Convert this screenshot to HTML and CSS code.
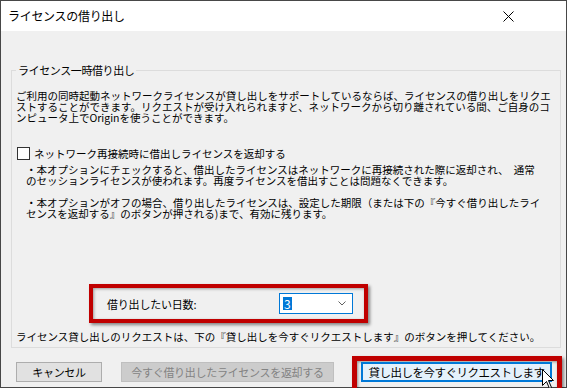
FILE: index.html
```html
<!DOCTYPE html>
<html lang="ja">
<head>
<meta charset="utf-8">
<title>ライセンスの借り出し</title>
<link rel="stylesheet" href="styles.css">
</head>
<body>
<div class="window">
  <div class="titlebar">
    <span class="title">ライセンスの借り出し</span>
    <svg class="close" width="11" height="11" viewBox="0 0 11 11"><path d="M0.5 0.5 L10.5 10.5 M10.5 0.5 L0.5 10.5" stroke="#000" stroke-width="1" fill="none"/></svg>
  </div>
  <div class="content">
    <fieldset class="group">
      <legend class="legend">ライセンス一時借り出し</legend>
      <div class="para">
        <div class="ln">ご利用の同時起動ネットワークライセンスが貸し出しをサポートしているならば、ライセンスの借り出しをリクエ</div>
        <div class="ln">ストすることができます。リクエストが受け入れられますと、ネットワークから切り離されている間、ご自身のコ</div>
        <div class="ln">ンピュータ上でOriginを使うことができます。</div>
      </div>
      <div class="check">
        <span class="box"></span>
        <span class="ln">ネットワーク再接続時に借出しライセンスを返却する</span>
      </div>
      <div class="note">
        <div class="ln">・本オプションにチェックすると、借出したライセンスはネットワークに再接続された際に返却され、　通常</div>
        <div class="ln">のセッションライセンスが使われます。再度ライセンスを借出すことは問題なくできます。</div>
        <div class="ln blank">&nbsp;</div>
        <div class="ln">・本オプションがオフの場合、借り出したライセンスは、設定した期限（または下の『今すぐ借り出したライ</div>
        <div class="ln">センスを返却する』のボタンが押される)まで、有効に残ります。</div>
      </div>
      <div class="days">
        <span class="days-label">借り出したい日数:</span>
        <div class="combo">
          <span class="sel">3</span>
          <svg class="chev" width="8" height="5" viewBox="0 0 8 5"><path d="M0.5 0.5 L4 4 L7.5 0.5" stroke="#606060" stroke-width="1" fill="none"/></svg>
        </div>
      </div>
      <div class="request ln">ライセンス貸し出しのリクエストは、下の『貸し出しを今すぐリクエストします』のボタンを押してください。</div>
    </fieldset>
    <div class="buttons">
      <button class="btn cancel">キャンセル</button>
      <button class="btn disabled" disabled>今すぐ借り出したライセンスを返却する</button>
      <div class="hl">
        <button class="btn default">貸し出しを今すぐリクエストします</button>
      </div>
    </div>
  </div>
  <svg class="cursor" width="13" height="21" viewBox="0 0 13 21"><path d="M0.5 0.5 L0.5 16.5 L4.5 12.5 L7.5 19.5 L9.5 18.5 L6.5 11.5 L11.5 11.5 Z" fill="#fff" stroke="#000" stroke-width="1" stroke-linejoin="miter"/></svg>
</div>
</body>
</html>
```

FILE: styles.css
```css
html, body {
  margin: 0;
  padding: 0;
  overflow: hidden;
  width: 567px;
  height: 388px;
}
body {
  font-family: "Noto Sans CJK JP", "Noto Sans", sans-serif;
  font-size: 10.5px;
  color: #000;
  background: #f0f0f0;
}
.window {
  position: relative;
  width: 567px;
  height: 388px;
  box-sizing: border-box;
  border: 1px solid #474747;
  background: #f0f0f0;
}
.titlebar {
  height: 30px;
  background: #fff;
  display: flex;
  align-items: center;
  justify-content: space-between;
  padding: 0 52px 0 7px;
}
.title {
  font-size: 12px;
  letter-spacing: -0.3px;
  line-height: 14px;
}
.close {
  display: block;
}
.content {
  padding: 33px 0 0 10px;
}
.ln {
  white-space: nowrap;
  line-height: 11px;
  letter-spacing: 0;
}
.group {
  margin: 0;
  width: 550px;
  box-sizing: border-box;
  border: 1px solid #dcdcdc;
  padding: 0 4px 5px 4px;
}
.legend {
  padding: 0 2px;
  line-height: 12px;
  font-size: 11px;
  letter-spacing: -0.4px;
}
.para {
  margin-top: 14px;
}
.check {
  display: flex;
  align-items: center;
  margin-top: 24px;
  height: 13px;
}
.box {
  width: 11px;
  height: 11px;
  border: 1px solid #333;
  background: #fff;
  margin-left: 1px;
  margin-right: 4px;
}
.note {
  margin-top: 4px;
  padding-left: 10px;
}
.days {
  margin: 65px 0 0 73px;
  width: 279px;
  height: 39px;
  box-sizing: border-box;
  border: 4px solid #c00000;
  display: flex;
  align-items: center;
  padding: 0 11px 0 14px;
  box-shadow: 2px 2px 3px rgba(0,0,0,0.45), inset 1px 1px 3px rgba(0,0,0,0.35);
}
.days-label {
  font-size: 11px;
  letter-spacing: -0.2px;
}
.combo {
  margin-left: auto;
  width: 74px;
  height: 21px;
  box-sizing: border-box;
  border: 1px solid #0078d7;
  background: #fff;
  display: flex;
  align-items: center;
  padding: 0 6px 0 3px;
}
.sel {
  background: #0078d7;
  color: #fff;
  font-size: 12px;
  line-height: 13px;
  padding: 0 1px;
}
.chev {
  margin-left: auto;
}
.request {
  margin-top: 8px;
}
.buttons {
  display: flex;
  align-items: flex-start;
  padding: 8px 0 0 5px;
}
.btn {
  font-family: inherit;
  font-size: 11px;
  letter-spacing: -0.3px;
  white-space: nowrap;
  height: 20px;
  padding: 0;
  box-sizing: border-box;
  border: 1px solid #adadad;
  background: #e1e1e1;
  color: #000;
  line-height: 16px;
}
.buttons > .btn {
  margin-top: 6px;
}
.cancel {
  width: 86px;
}
.disabled {
  width: 213px;
  margin-left: 19px;
  background: #cccccc;
  border-color: #bfbfbf;
  color: #838383;
}
.hl {
  margin-left: 18px;
  width: 210px;
  height: 32px;
  box-sizing: border-box;
  border: 5px solid #c00000;
  border-bottom-width: 0;
  padding: 1px 0 0 4px;
  box-shadow: 2px 2px 3px rgba(0,0,0,0.45), inset 1px 1px 3px rgba(0,0,0,0.4);
}
.default {
  width: 191px;
  background: #e5f1fb;
  border: 1px solid #0078d7;
  box-shadow: inset 0 0 0 1px #0078d7;
  font-size: 11.5px;
  letter-spacing: -0.5px;
}
.cursor {
  position: absolute;
  left: 541px;
  top: 368px;
}
```
